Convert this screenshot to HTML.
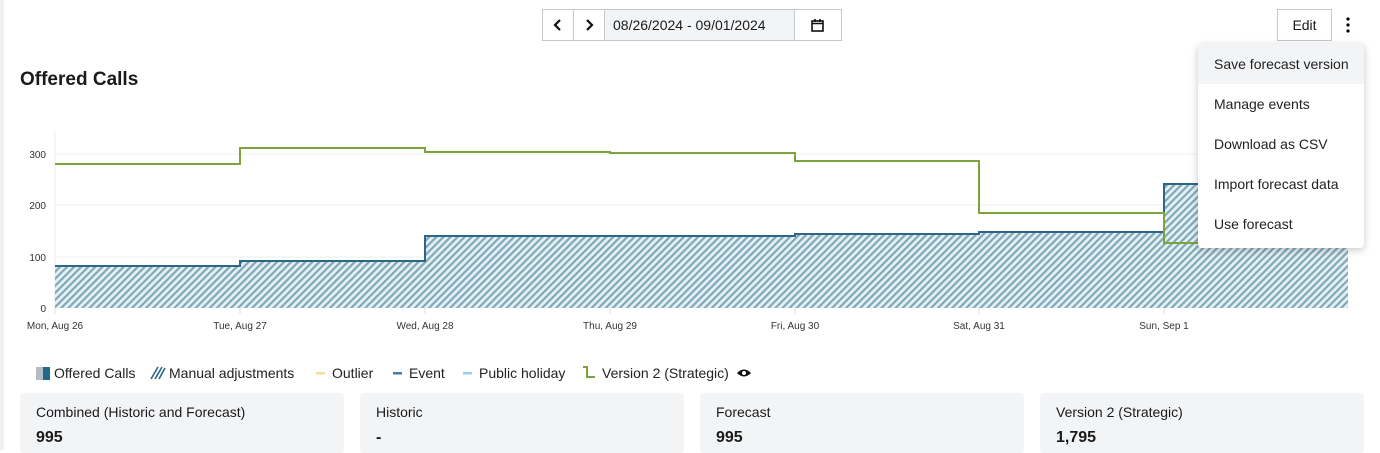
<!DOCTYPE html>
<html><head><meta charset="utf-8"><style>
body{margin:0;width:1380px;height:450px;overflow:hidden;background:#fff;font-family:"Liberation Sans",sans-serif;color:#1a1a1a;position:relative}
.abs{position:absolute}
.btn{position:absolute;border:1px solid #c4c7cc;background:#fff;box-sizing:border-box}
.menu{position:absolute;left:1198px;top:44px;width:166px;height:204px;background:#fff;border-radius:4px;box-shadow:0 2px 8px rgba(0,0,0,.22)}
.menu div{height:40px;line-height:40px;padding-left:16px;font-size:14px;color:#222}
.card{position:absolute;top:393px;width:324px;height:60px;background:#f3f4f6;border-radius:4px}
.card .t{position:absolute;left:16px;top:11px;font-size:14px}
.card .v{position:absolute;left:16px;top:36px;font-size:16px;font-weight:bold}
.lg{position:absolute;top:365px;font-size:14px;color:#222}
</style></head><body>
<div class="abs" style="left:0;top:0;width:4px;height:450px;background:#eef0f2"></div>
<div class="btn" style="left:542px;top:9px;width:32px;height:32px"></div>
<div class="btn" style="left:573px;top:9px;width:32px;height:32px"></div>
<div class="btn" style="left:604px;top:9px;width:191px;height:32px;background:#f3f4f6"></div>
<div class="btn" style="left:794px;top:9px;width:48px;height:32px"></div>
<svg class="abs" style="left:542px;top:9px" width="300" height="32">
<path d="M18 11l-5 5 5 5" stroke="#111" stroke-width="2.2" fill="none"/>
<path d="M45 11l5 5-5 5" stroke="#111" stroke-width="2.2" fill="none"/>
<rect x="270" y="12" width="11" height="10" fill="none" stroke="#111" stroke-width="1.6"/>
<path d="M270 14.5h11M273 10v3M278 10v3" stroke="#111" stroke-width="1.6"/>
</svg>
<div class="abs" style="left:613px;top:17px;font-size:14px">08/26/2024 - 09/01/2024</div>
<div class="btn" style="left:1277px;top:9px;width:55px;height:32px;text-align:center;line-height:30px;font-size:14px">Edit</div>
<svg class="abs" style="left:1340px;top:16px" width="16" height="18"><circle cx="8" cy="3" r="1.6"/><circle cx="8" cy="9" r="1.6"/><circle cx="8" cy="15" r="1.6"/></svg>
<div class="abs" style="left:20px;top:69px;font-size:19px;font-weight:bold">Offered Calls</div>
<svg class="abs" style="left:0;top:0" width="1380" height="345">
<defs><pattern id="h" width="5" height="5" patternUnits="userSpaceOnUse" patternTransform="rotate(45)"><rect width="5" height="5" fill="#e6f0f3"/><rect width="2.2" height="5" fill="#7fa9bb"/></pattern></defs>
<g stroke="#eeeff1" stroke-width="1"><path d="M55 154H1348M55 205H1348M55 257H1348M55 130V308"/></g>
<g font-size="10" fill="#333" text-anchor="end"><text x="46" y="158">300</text><text x="46" y="209">200</text><text x="46" y="261">100</text><text x="46" y="312">0</text></g>
<path d="M55 308V266H240V261H425V236H610V236H795V234H979V232H1164V184H1348V308Z" fill="url(#h)"/>
<path d="M55 266H240V261H425V236H610V236H795V234H979V232H1164V184H1348" stroke="#2e6785" stroke-width="2" fill="none"/>
<path d="M55 164H240V148H425V152H610V153H795V161H979V213H1164V243H1348" stroke="#7ea33a" stroke-width="2" fill="none"/>
<g stroke="#ddd"><path d="M55 308v6M240 308v6M425 308v6M610 308v6M795 308v6M979 308v6M1164 308v6"/></g>
<g font-size="10" fill="#333" text-anchor="middle"><text x="55" y="329">Mon, Aug 26</text><text x="240" y="329">Tue, Aug 27</text><text x="425" y="329">Wed, Aug 28</text><text x="610" y="329">Thu, Aug 29</text><text x="795" y="329">Fri, Aug 30</text><text x="979" y="329">Sat, Aug 31</text><text x="1164" y="329">Sun, Sep 1</text></g>
</svg>
<div class="menu"><div style="background:#f3f4f6;border-radius:4px 4px 0 0">Save forecast version</div><div>Manage events</div><div>Download as CSV</div><div>Import forecast data</div><div>Use forecast</div></div>
<svg class="abs" style="left:0;top:360px" width="780" height="26">
<rect x="36" y="7" width="7" height="13" fill="#b5bcc4"/><rect x="43" y="7" width="7" height="13" fill="#1f6a8c"/>
<g stroke="#2e6785" stroke-width="1.6"><path d="M151 19l7-12M155 19l7-12M159 19l6-11"/></g>
<rect x="316" y="12" width="9" height="2.5" fill="#f6dc9a"/>
<rect x="393" y="12" width="9" height="2.5" fill="#4f7a99"/>
<rect x="463" y="12" width="9" height="2.5" fill="#8fd3ea"/>
<path d="M583 7h4v10h8" stroke="#7ea33a" stroke-width="2" fill="none"/>
<path d="M737 13q7-7 14 0q-7 7-14 0z" fill="#111"/><circle cx="744" cy="13" r="2" fill="#fff"/>
</svg>
<div class="lg" style="left:54px">Offered Calls</div>
<div class="lg" style="left:169px">Manual adjustments</div>
<div class="lg" style="left:332px">Outlier</div>
<div class="lg" style="left:409px">Event</div>
<div class="lg" style="left:479px">Public holiday</div>
<div class="lg" style="left:602px">Version 2 (Strategic)</div>
<div class="card" style="left:20px"><div class="t">Combined (Historic and Forecast)</div><div class="v">995</div></div>
<div class="card" style="left:360px"><div class="t">Historic</div><div class="v">-</div></div>
<div class="card" style="left:700px"><div class="t">Forecast</div><div class="v">995</div></div>
<div class="card" style="left:1040px"><div class="t">Version 2 (Strategic)</div><div class="v">1,795</div></div>
</body></html>
